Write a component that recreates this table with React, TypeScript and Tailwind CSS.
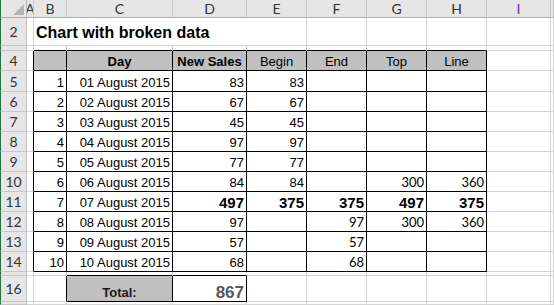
import { Fragment } from "react";

type Kind = "arial" | "bold" | "big" | "calibri" | "total" | "sum" | "head";

type Cell = {
  text: string;
  align?: "left" | "center" | "right";
  kind?: Kind;
  fill?: boolean;
};

const COLS = ["A", "B", "C", "D", "E", "F", "G", "H", "I", "J"];
const ROWS = [2, 3, 4, 5, 6, 7, 8, 9, 10, 11, 12, 13, 14, 15, 16, 17];

const days = [
  { sales: "83", begin: "83" },
  { sales: "67", begin: "67" },
  { sales: "45", begin: "45" },
  { sales: "97", begin: "97" },
  { sales: "77", begin: "77" },
  { sales: "84", begin: "84", top: "300", line: "360" },
  { sales: "497", begin: "375", end: "375", top: "497", line: "375", bold: true },
  { sales: "97", end: "97", top: "300", line: "360" },
  { sales: "57", end: "57" },
  { sales: "68", end: "68" },
];

const cells: Record<string, Cell> = {
  "4B": { text: "", fill: true },
  "4C": { text: "Day", align: "center", kind: "head", fill: true },
  "4D": { text: "New Sales", align: "center", kind: "head", fill: true },
  "4E": { text: "Begin", align: "center", fill: true },
  "4F": { text: "End", align: "center", fill: true },
  "4G": { text: "Top", align: "center", fill: true },
  "4H": { text: "Line", align: "center", fill: true },
  "16C": { text: "Total:", align: "center", kind: "total", fill: true },
  "16D": { text: "867", align: "right", kind: "sum" },
};

days.forEach((d, i) => {
  const r = i + 5;
  const n = String(i + 1).padStart(2, "0");
  const num: Kind = d.bold ? "big" : "arial";
  cells[`${r}B`] = { text: String(i + 1), align: "right" };
  cells[`${r}C`] = { text: `${n} August 2015`, align: "right" };
  cells[`${r}D`] = { text: d.sales, align: "right", kind: num };
  if (d.begin) cells[`${r}E`] = { text: d.begin, align: "right", kind: num };
  if (d.end) cells[`${r}F`] = { text: d.end, align: "right", kind: d.bold ? "big" : "calibri" };
  if (d.top) cells[`${r}G`] = { text: d.top, align: "right", kind: d.bold ? "big" : "calibri" };
  if (d.line) cells[`${r}H`] = { text: d.line, align: "right", kind: d.bold ? "big" : "calibri" };
});

const inTable = (r: number, c: number) =>
  (r >= 4 && r <= 14 && c >= 1 && c <= 7) || (r === 16 && (c === 2 || c === 3));

const kindClass: Record<Kind, string> = {
  arial: "text-[13px] text-black",
  head: "text-[13px] font-bold text-black",
  big: "text-[15px] font-bold text-black",
  calibri: "font-['Lato',sans-serif] text-[13px] text-black",
  total: "text-[13px] font-bold text-[#1a1a1a]",
  sum: "text-[17px] font-bold text-[#595959]",
};

const alignClass = {
  left: "justify-start pl-[2px]",
  center: "justify-center",
  right: "justify-end pr-[2px]",
};

function SheetCell({ r, c }: { r: number; c: number }) {
  const key = `${r}${COLS[c]}`;
  const cell = cells[key];
  const rightBlack = inTable(r, c) || inTable(r, c + 1);
  const bottomBlack = inTable(r, c) || inTable(r + 1, c);
  return (
    <div
      className={[
        "flex items-end overflow-hidden whitespace-nowrap border-r border-b pb-[1px] leading-[15px]",
        rightBlack ? "border-r-black" : "border-r-[#d4d4d4]",
        bottomBlack ? "border-b-black" : "border-b-[#d4d4d4]",
        cell?.fill ? "bg-[#c0c0c0]" : "bg-white",
        alignClass[cell?.align ?? "left"],
        kindClass[cell?.kind ?? "arial"],
      ].join(" ")}
    >
      {cell?.text}
    </div>
  );
}

export default function App() {
  return (
    <div className="grid h-[305px] w-[554px] grid-cols-[27px_7px_33px_106px_74px_60px_60px_60px_60px_64px_1fr] grid-rows-[18px_28px_5px_20px_21px_repeat(9,20px)_4px_26px_1fr] overflow-hidden bg-white font-['Liberation_Sans',Arial,sans-serif]">
      {/* corner + column letters */}
      <div className="flex items-end justify-end border-l border-r border-b border-l-[#217346] border-r-[#bdbdbd] border-b-[#ababab] bg-[#e6e6e6] p-[2px]">
        <svg width="11" height="11" viewBox="0 0 11 11">
          <polygon points="11,0 11,11 0,11" fill="#b4b4b4" />
        </svg>
      </div>
      {COLS.map((l) => (
        <div
          key={l}
          className={`flex items-center justify-center overflow-hidden border-r border-b border-r-[#c6c6c6] border-b-[#ababab] bg-[#e6e6e6] font-['Lato',sans-serif] text-[14px] ${
            l === "I" ? "text-[#7030a0]" : "text-[#333]"
          }`}
        >
          {l === "J" ? "" : l}
        </div>
      ))}

      {ROWS.map((r) => (
        <Fragment key={r}>
          <div className="flex items-center justify-center overflow-hidden border-l border-r border-b border-l-[#217346] border-r-[#bdbdbd] border-b-[#c6c6c6] bg-[#e6e6e6] font-['Lato',sans-serif] text-[14px] text-[#333]">
            {r === 3 || r === 15 || r === 17 ? "" : r}
          </div>
          {r === 2 ? (
            <>
              <SheetCell r={2} c={0} />
              <div className="col-span-3 flex items-end whitespace-nowrap border-b border-b-[#d4d4d4] pb-[3px] pl-[2px] text-[16px] font-bold leading-[18px] text-black">
                Chart with broken data
              </div>
              {[4, 5, 6, 7, 8, 9].map((c) => (
                <SheetCell key={c} r={2} c={c} />
              ))}
            </>
          ) : (
            COLS.map((_, c) => <SheetCell key={c} r={r} c={c} />)
          )}
        </Fragment>
      ))}
    </div>
  );
}
